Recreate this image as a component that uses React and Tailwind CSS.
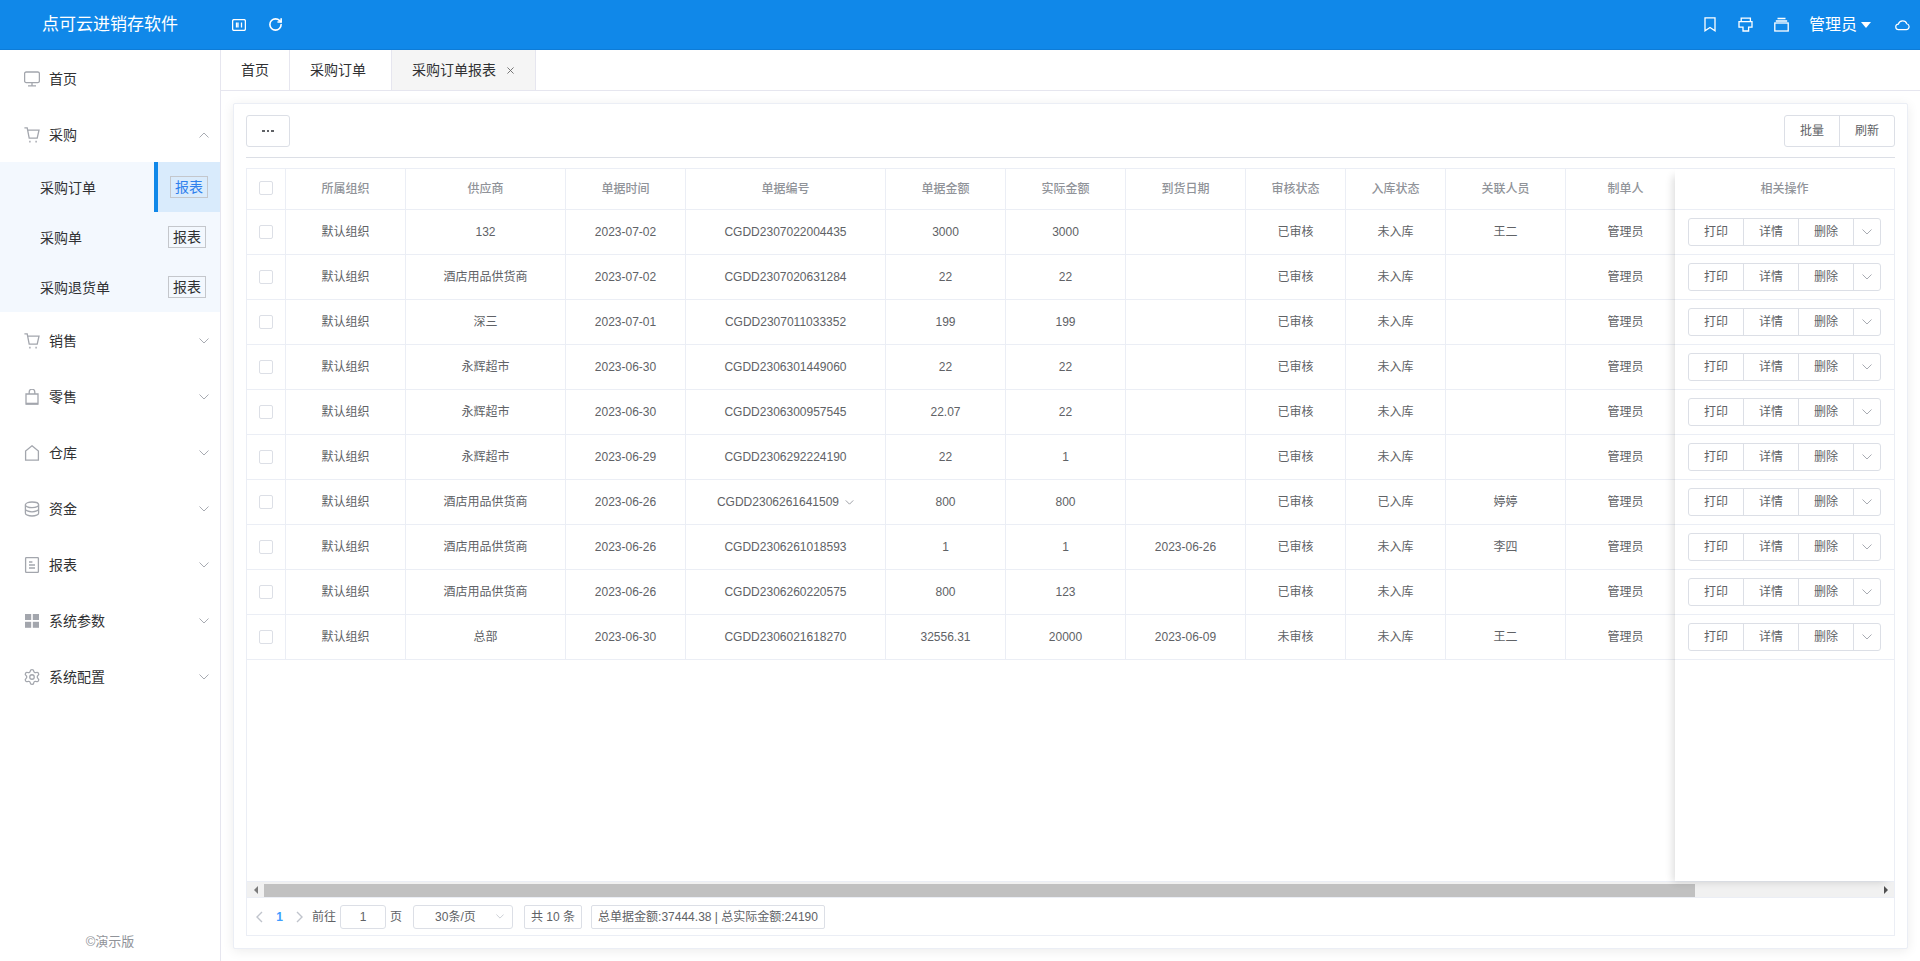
import React from "react";
import { RotateCw, Settings } from "lucide-react";

const FONT = "font-['Liberation_Sans','Noto_Sans_CJK_SC',sans-serif]";

const ROWS = [
  ["默认组织", "132", "2023-07-02", "CGDD2307022004435", "3000", "3000", "", "已审核", "未入库", "王二", "管理员"],
  ["默认组织", "酒店用品供货商", "2023-07-02", "CGDD2307020631284", "22", "22", "", "已审核", "未入库", "", "管理员"],
  ["默认组织", "深三", "2023-07-01", "CGDD2307011033352", "199", "199", "", "已审核", "未入库", "", "管理员"],
  ["默认组织", "永辉超市", "2023-06-30", "CGDD2306301449060", "22", "22", "", "已审核", "未入库", "", "管理员"],
  ["默认组织", "永辉超市", "2023-06-30", "CGDD2306300957545", "22.07", "22", "", "已审核", "未入库", "", "管理员"],
  ["默认组织", "永辉超市", "2023-06-29", "CGDD2306292224190", "22", "1", "", "已审核", "未入库", "", "管理员"],
  ["默认组织", "酒店用品供货商", "2023-06-26", "CGDD2306261641509", "800", "800", "", "已审核", "已入库", "婷婷", "管理员"],
  ["默认组织", "酒店用品供货商", "2023-06-26", "CGDD2306261018593", "1", "1", "2023-06-26", "已审核", "未入库", "李四", "管理员"],
  ["默认组织", "酒店用品供货商", "2023-06-26", "CGDD2306260220575", "800", "123", "", "已审核", "未入库", "", "管理员"],
  ["默认组织", "总部", "2023-06-30", "CGDD2306021618270", "32556.31", "20000", "2023-06-09", "未审核", "未入库", "王二", "管理员"],
];

const COLUMNS = [
  ["所属组织", "w-[120px]"],
  ["供应商", "w-[160px]"],
  ["单据时间", "w-[120px]"],
  ["单据编号", "w-[200px]"],
  ["单据金额", "w-[120px]"],
  ["实际金额", "w-[120px]"],
  ["到货日期", "w-[120px]"],
  ["审核状态", "w-[100px]"],
  ["入库状态", "w-[100px]"],
  ["关联人员", "w-[120px]"],
  ["制单人", "w-[120px]"],
];

const Chevron = ({ up, className = "w-[10px] h-[6px]", color = "#a8abb2" }) => (
  <svg viewBox="0 0 10 6" className={className} fill="none" stroke={color} strokeWidth="1">
    <path d={up ? "M0.5 5.5 5 1l4.5 4.5" : "M0.5 0.5 5 5l4.5-4.5"} />
  </svg>
);

const iconProps = { viewBox: "0 0 16 16", className: "w-4 h-4 shrink-0", fill: "none", stroke: "#a3a6ad", strokeWidth: "1.3" };

const MonitorIcon = () => (
  <svg {...iconProps}><rect x="0.6" y="1" width="14.8" height="10.6" rx="1.6" /><path d="M8 11.6v3M4 14.8h8" /></svg>
);
const CartIcon = () => (
  <svg {...iconProps}><path d="M0.4 0.8h2.8l2 10.4h8l1.8-8H3.6" /><path d="M5.2 14.6h1.4M11.4 14.6h1.4" strokeWidth="1.6" /></svg>
);
const BagIcon = () => (
  <svg {...iconProps}><path d="M2 5h12v10H2zM5.2 5V3a2.8 2.8 0 0 1 5.6 0v2" /><path d="M2 14.6h12" strokeWidth="1.8" /></svg>
);
const HouseIcon = () => (
  <svg {...iconProps}><path d="M8 0.8 14.4 6v9.2H1.6V6z" /></svg>
);
const StackIcon = () => (
  <svg {...iconProps}>
    <ellipse cx="8" cy="3.8" rx="6.6" ry="2.8" />
    <path d="M1.4 3.8v8.4c0 1.5 3 2.8 6.6 2.8s6.6-1.3 6.6-2.8V3.8M1.4 8c0 1.5 3 2.8 6.6 2.8s6.6-1.3 6.6-2.8" />
  </svg>
);
const DocIcon = () => (
  <svg {...iconProps}><rect x="1.6" y="0.6" width="12.8" height="14.8" rx="0.8" /><path d="M5 5h3.4M5 8h6M5 11h6" /></svg>
);
const GridIcon = () => (
  <svg viewBox="0 0 16 16" className="w-4 h-4 shrink-0" fill="#a3a6ad">
    <rect x="1" y="1" width="6.2" height="6" /><rect x="8.8" y="1" width="6.2" height="6" />
    <rect x="1" y="8.8" width="6.2" height="6" /><rect x="8.8" y="8.8" width="6.2" height="6" />
  </svg>
);
const GearIcon = () => <Settings className="w-[18px] h-[18px] -ml-px -mr-px shrink-0" stroke="#a3a6ad" strokeWidth={1.7} />;

const NAV_BOTTOM = [
  ["销售", CartIcon],
  ["零售", BagIcon],
  ["仓库", HouseIcon],
  ["资金", StackIcon],
  ["报表", DocIcon],
  ["系统参数", GridIcon],
  ["系统配置", GearIcon],
];

const NavItem = ({ label, Icon, chevron, up }) => (
  <div className="h-[56px] pt-[2px] flex items-center pl-[24px] pr-[11px] gap-[9px] text-[14px] text-[#303133]">
    <Icon />
    <span className="flex-1">{label}</span>
    {chevron && <Chevron up={up} />}
  </div>
);

const SubItem = ({ label, active }) => (
  <div className="h-[50px] flex items-center text-[14px] text-[#303133]">
    <span className="w-[154px] pl-[40px] pt-[2px]">{label}</span>
    {active ? (
      <div className="flex-1 h-full flex items-center border-l-4 border-[#1088e9] bg-[#d9ebfc] pl-[12px]">
        <span className="border border-[#c4c7cc] px-[4px] h-[22px] leading-[20px] text-[#2f80ed]">报表</span>
      </div>
    ) : (
      <div className="flex-1 h-full flex items-center pl-[14px]">
        <span className="border border-[#c4c7cc] px-[4px] h-[22px] leading-[20px] text-[#303133]">报表</span>
      </div>
    )}
  </div>
);

const Sidebar = () => (
  <aside className="w-[221px] shrink-0 border-r border-[#e6e6ef] flex flex-col bg-white">
    <NavItem label="首页" Icon={MonitorIcon} />
    <NavItem label="采购" Icon={CartIcon} chevron up />
    <div className="bg-[#f3f8fe]">
      <SubItem label="采购订单" active />
      <SubItem label="采购单" />
      <SubItem label="采购退货单" />
    </div>
    {NAV_BOTTOM.map(([label, Icon]) => (
      <NavItem key={label} label={label} Icon={Icon} chevron />
    ))}
    <div className="mt-auto pb-[10px] text-center text-[13px] text-[#909399]">©演示版</div>
  </aside>
);

const Header = () => (
  <header className="h-[50px] shrink-0 bg-[#1088e9] border-b border-[#0d7cd8] flex items-center text-white">
    <div className="w-[232px] pl-[42px] text-[17px]">点可云进销存软件</div>
    <svg viewBox="0 0 14 12" className="w-[14px] h-[12px]" fill="none" stroke="#fff" strokeWidth="1.3">
      <rect x="0.6" y="0.6" width="12.8" height="10.8" rx="1.4" />
      <path d="M4.5 3.5v5M6 3.5v5M9.5 3.5v5M8 4.5v0M8 7.5v0" />
    </svg>
    <RotateCw className="w-[15px] h-[15px] ml-[22px]" stroke="#fff" strokeWidth={2.6} />
    <div className="ml-auto flex items-center">
      <svg viewBox="0 0 12 15" className="w-[12px] h-[15px]" fill="none" stroke="#fff" strokeWidth="1.3">
        <path d="M1 0.8h10v13L6 10.5 1 13.8z" />
      </svg>
      <svg viewBox="0 0 15 15" className="w-[15px] h-[15px] ml-[22px]" fill="none" stroke="#fff" strokeWidth="1.3">
        <path d="M3.2 4.6V1.2h9.2v3.4M1 4.6h13v5.6h-3.4v3.8H5v-3.8H1z" />
      </svg>
      <svg viewBox="0 0 15 15" className="w-[15px] h-[15px] ml-[21px]" fill="none" stroke="#fff" strokeWidth="1.3">
        <path d="M3.5 1.5h8M1.8 4h11.4" /><rect x="0.8" y="6" width="13.4" height="8" />
      </svg>
      <span className="ml-[20px] text-[16px]">管理员</span>
      <span className="ml-[4px] w-0 h-0 border-x-[5px] border-x-transparent border-t-[6px] border-t-white" />
      <svg viewBox="0 0 16 12" className="w-[15px] h-[12px] ml-[24px] mr-[10px]" fill="none" stroke="#fff" strokeWidth="1.3">
        <path d="M4 11h8a3.2 3.2 0 0 0 .6-6.3A4.8 4.8 0 0 0 3.6 5 3 3 0 0 0 4 11z" />
      </svg>
    </div>
  </header>
);

const Tabs = () => (
  <div className="h-[41px] shrink-0 flex border-b border-[#e6e6ef] text-[14px] text-[#303133] bg-white">
    <div className="w-[69px] pl-[20px] border-r border-[#e6e6ef] flex items-center">首页</div>
    <div className="w-[102px] pl-[20px] border-r border-[#e6e6ef] flex items-center">采购订单</div>
    <div className="w-[144px] pl-[20px] border-r border-[#e6e6ef] bg-[#f5f5f5] flex items-center">
      <span>采购订单报表</span>
      <svg viewBox="0 0 8 8" className="w-[7px] h-[7px] ml-[11px]" fill="none" stroke="#666" strokeWidth="1">
        <path d="M0.5 0.5l7 7M7.5 0.5l-7 7" />
      </svg>
    </div>
  </div>
);

const Checkbox = () => (
  <span className="inline-block align-middle w-[14px] h-[14px] border border-[#dcdfe6] rounded-[2px] bg-white" />
);

const DataTable = () => (
  <div className="flex-1 min-w-0 overflow-hidden">
    <table className="table-fixed border-separate border-spacing-0 w-[1439px] text-[12px] text-center">
      <colgroup>
        <col className="w-[39px]" />
        {COLUMNS.map(([name, width]) => (
          <col key={name} className={width} />
        ))}
      </colgroup>
      <thead>
        <tr className="h-[41px] text-[#909399]">
          <th className="border-r border-b border-[#ebeef5] font-medium pb-[4px]"><Checkbox /></th>
          {COLUMNS.map(([name]) => (
            <th key={name} className="border-r border-b border-[#ebeef5] font-medium">{name}</th>
          ))}
        </tr>
      </thead>
      <tbody className="text-[#606266]">
        {ROWS.map((row) => (
          <tr key={row[3]} className="h-[45px]">
            <td className="border-r border-b border-[#ebeef5] pb-[2px]"><Checkbox /></td>
            {row.map((value, i) => (
              <td key={i} className="border-r border-b border-[#ebeef5]">
                {i === 3 && row[3] === "CGDD2306261641509" ? (
                  <span className="inline-flex items-center gap-[6px]">
                    {value}
                    <Chevron className="w-[9px] h-[5px]" color="#8a8d94" />
                  </span>
                ) : (
                  value
                )}
              </td>
            ))}
          </tr>
        ))}
      </tbody>
    </table>
  </div>
);

const FixedActions = () => (
  <div className="w-[219px] shrink-0 relative z-10 bg-white shadow-[-5px_4px_8px_-3px_rgba(0,0,0,0.14)] text-[12px] text-center">
    <div className="h-[41px] flex items-center justify-center border-b border-[#ebeef5] text-[#909399] font-medium">相关操作</div>
    {ROWS.map((row) => (
      <div key={row[3]} className="h-[45px] flex items-center justify-center border-b border-[#ebeef5] text-[#606266]">
        <div className="h-[28px] w-[193px] flex border border-[#dcdfe6] rounded-[3px]">
          {["打印", "详情", "删除"].map((action) => (
            <span key={action} className="w-[55px] border-r border-[#dcdfe6] flex items-center justify-center">{action}</span>
          ))}
          <span className="flex-1 flex items-center justify-center"><Chevron /></span>
        </div>
      </div>
    ))}
  </div>
);

const ScrollBar = () => (
  <div className="h-[16px] shrink-0 bg-[#f1f1f1] border-b border-[#ebeef5] flex items-end">
    <div className="w-[17px] h-full flex items-center justify-center">
      <span className="w-0 h-0 border-y-[4px] border-y-transparent border-r-[4px] border-r-[#7b7b7b]" />
    </div>
    <div className="w-[1431px] h-[13px] bg-[#c1c1c1]" />
    <div className="flex-1" />
    <div className="w-[17px] h-full flex items-center justify-center">
      <span className="w-0 h-0 border-y-[4px] border-y-transparent border-l-[4px] border-l-[#505050]" />
    </div>
  </div>
);

const Pagination = () => (
  <div className="flex-1 flex items-center pl-[9px] text-[12px] text-[#606266]">
    <svg viewBox="0 0 7 12" className="w-[7px] h-[12px]" fill="none" stroke="#c0c4cc" strokeWidth="1.4"><path d="M6 1 1 6l5 5" /></svg>
    <span className="w-[33px] text-center font-bold text-[#409eff]">1</span>
    <svg viewBox="0 0 7 12" className="w-[7px] h-[12px]" fill="none" stroke="#c0c4cc" strokeWidth="1.4"><path d="M1 1l5 5-5 5" /></svg>
    <span className="ml-[9px]">前往</span>
    <span className="ml-[4px] w-[46px] h-[24px] border border-[#dcdfe6] rounded-[3px] flex items-center justify-center">1</span>
    <span className="ml-[4px]">页</span>
    <span className="ml-[11px] w-[100px] h-[24px] border border-[#dcdfe6] rounded-[3px] flex items-center pl-[21px] pr-[8px]">
      <span className="flex-1">30条/页</span>
      <Chevron className="w-[8px] h-[5px]" color="#c0c4cc" />
    </span>
    <span className="ml-[11px] w-[58px] h-[24px] border border-[#dcdfe6] rounded-[2px] flex items-center justify-center">共 10 条</span>
    <span className="ml-[9px] w-[234px] h-[24px] border border-[#dcdfe6] rounded-[2px] flex items-center justify-center whitespace-nowrap">总单据金额:37444.38 | 总实际金额:24190</span>
  </div>
);

const Card = () => (
  <div className="flex-1 min-h-0 flex flex-col bg-white border border-[#ebeef5] rounded-[2px] shadow-[0_2px_12px_rgba(0,0,0,0.08)] px-[12px] pt-[11px] pb-[12px]">
    <div className="flex justify-between shrink-0">
      <span className="w-[44px] h-[32px] border border-[#dcdfe6] rounded-[3px] flex items-center justify-center gap-[2px]">
        <span className="w-[2.5px] h-[2.5px] bg-[#606266]" />
        <span className="w-[2.5px] h-[2.5px] bg-[#606266]" />
        <span className="w-[2.5px] h-[2.5px] bg-[#606266]" />
      </span>
      <div className="flex h-[32px] border border-[#dcdfe6] rounded-[3px] text-[12px] text-[#606266]">
        <span className="w-[55px] border-r border-[#dcdfe6] flex items-center justify-center">批量</span>
        <span className="w-[54px] flex items-center justify-center">刷新</span>
      </div>
    </div>
    <div className="mt-[10px] mb-[10px] shrink-0 border-t border-[#dcdfe6]" />
    <div className="flex-1 min-h-0 flex flex-col border border-[#ebeef5]">
      <div className="flex h-[713px] shrink-0 border-b border-[#ebeef5]">
        <DataTable />
        <FixedActions />
      </div>
      <ScrollBar />
      <Pagination />
    </div>
  </div>
);

export default function App() {
  return (
    <div className={`${FONT} h-[961px] w-full overflow-hidden flex flex-col bg-white`}>
      <Header />
      <div className="flex-1 min-h-0 flex">
        <Sidebar />
        <main className="flex-1 min-w-0 flex flex-col">
          <Tabs />
          <div className="flex-1 min-h-0 flex flex-col px-[12px] pt-[12px] pb-[12px]">
            <Card />
          </div>
        </main>
      </div>
    </div>
  );
}
